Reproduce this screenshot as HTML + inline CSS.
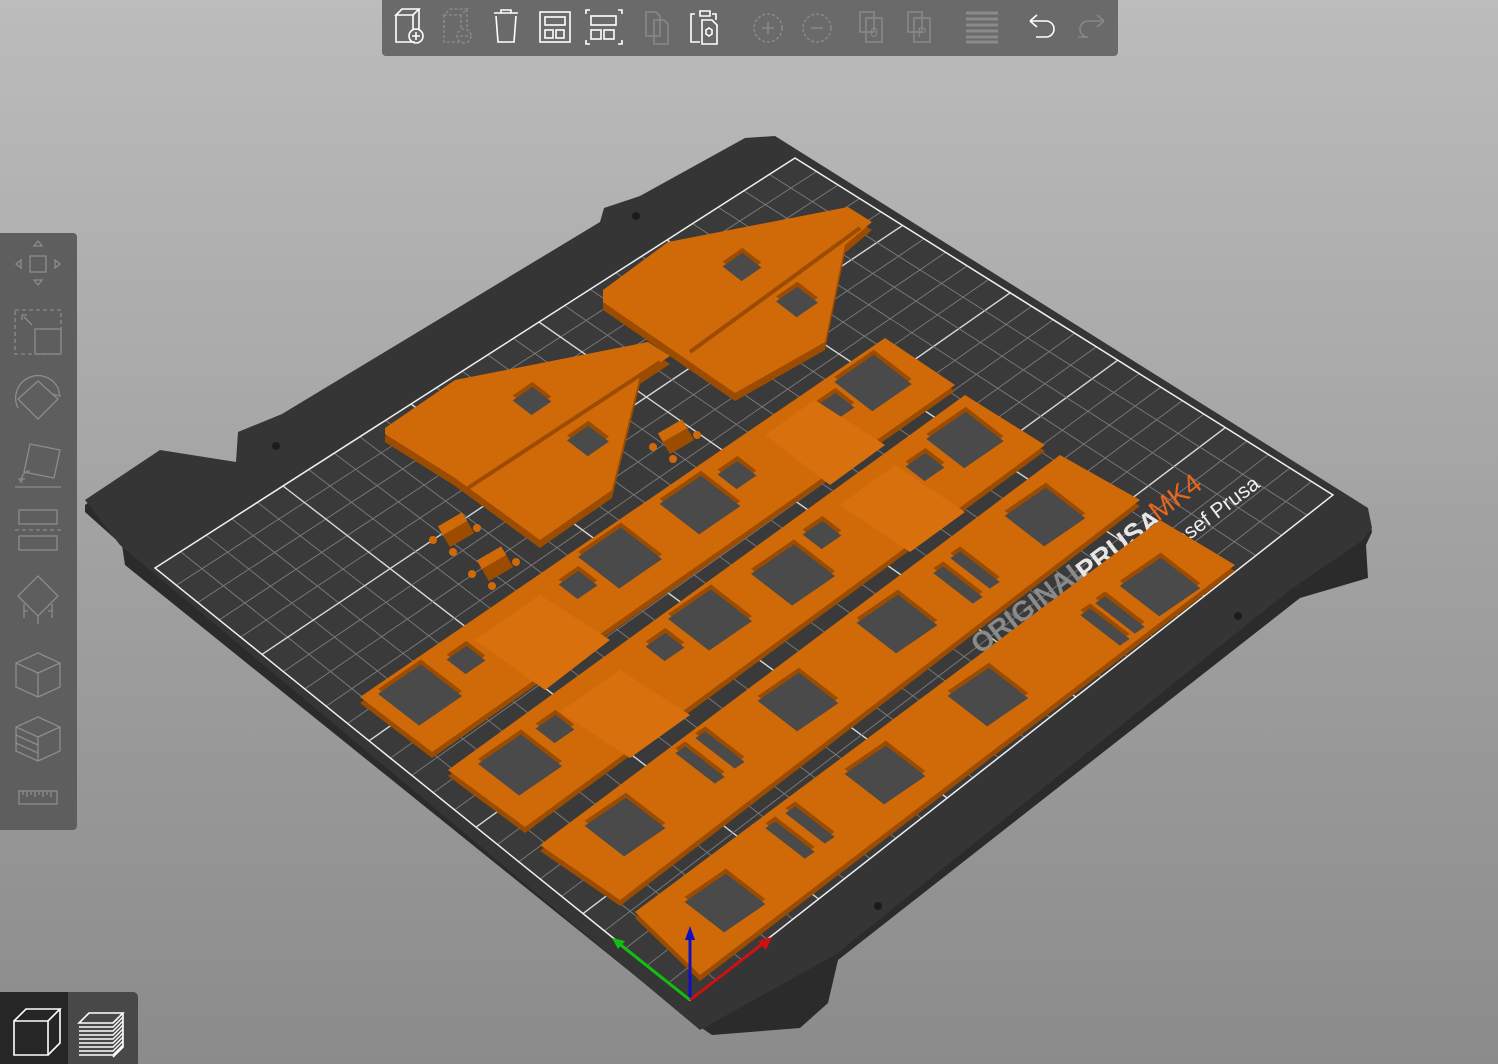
<!DOCTYPE html>
<html><head><meta charset="utf-8">
<style>
html,body{margin:0;padding:0;width:1498px;height:1064px;overflow:hidden}
body{background:linear-gradient(#bcbcbc,#a2a2a2 50%,#8b8b8b);font-family:"Liberation Sans",sans-serif;position:relative}
#scene{position:absolute;left:0;top:0}
.tb{position:absolute;left:382px;top:0;width:736px;height:56px;background:#6a6a6a;border-radius:0 0 4px 4px}
.lb{position:absolute;left:0;top:233px;width:77px;height:597px;background:#5e5e5e;border-radius:0 4px 4px 0}
.bl{position:absolute;left:0;top:992px;width:138px;height:72px;background:#484848;border-radius:0 5px 0 0}
.bl1{position:absolute;left:0;top:992px;width:68px;height:72px;background:#262626}
svg{position:absolute}
</style></head><body>
<svg id="scene" width="1498" height="1064" viewBox="0 0 1498 1064">
<polygon points="85,505 160,452 236,468 238,436 282,418 600,228 604,212 640,200 745,143 775,140 1368,512 1372,532 1366,545 1368,578 1300,598 838,960 828,1003 800,1028 712,1035 690,1020 125,565 122,545 85,512" fill="#2b2b2b"/>
<polygon points="85,500 160,450 236,462 238,432 282,414 600,222 604,208 640,196 745,138 775,136 1368,508 1372,528 1363,540 1290,590 835,955 700,1030 120,545" fill="#353535"/>
<g id="grid"></g>
<text x="0" y="0" transform="translate(980,655) rotate(-37)" font-size="28" fill="#8a8a8a" font-weight="bold">ORIGINAL</text>
<text x="0" y="0" transform="translate(1085,582) rotate(-37)" font-size="28" fill="#e6e6e6" font-weight="bold">PRUSA</text>
<text x="0" y="0" transform="translate(1158,522) rotate(-37)" font-size="28" fill="#e8661c">MK4</text>
<text x="0" y="0" transform="translate(1150,570) rotate(-37)" font-size="21" fill="#eee">by Josef Prusa</text>
<g id="parts"></g>
<circle cx="636" cy="216" r="4" fill="#1c1c1c"/><circle cx="276" cy="446" r="4" fill="#1c1c1c"/>
<circle cx="1238" cy="616" r="4" fill="#1c1c1c"/><circle cx="878" cy="906" r="4" fill="#1c1c1c"/>
<line x1="690" y1="1000" x2="690" y2="932" stroke="#1010c0" stroke-width="3"/><polygon points="685,940 695,940 690,926" fill="#1010c0"/>
<line x1="690" y1="1000" x2="617" y2="942" stroke="#10c010" stroke-width="3"/><polygon points="612,938 625,941 618,949" fill="#10c010"/>
<line x1="690" y1="1000" x2="765" y2="942" stroke="#d01010" stroke-width="3"/><polygon points="772,937 758,941 766,950" fill="#d01010"/>
</svg>

<div class="tb"></div>
<svg style="left:382px;top:0" width="736" height="56" fill="none" stroke="#fff" stroke-width="1.6">
<g><path d="M14 15h17l6-6h-17zM14 15v27h19M31 15v14M37 9v20"/><circle cx="34" cy="36" r="7"/><path d="M30 36h8M34 32v8"/></g>
<g stroke="#888" stroke-dasharray="3 2"><path d="M62 15h17l6-6h-17zM62 15v27h19M79 15v14M85 9v20"/><circle cx="82" cy="36" r="7"/><path d="M78 36h8"/></g>
<g><path d="M112 13h24M119 13v-3h10v3M114 16l2 26h16l2-26"/></g>
<g><rect x="158" y="12" width="30" height="30"/><rect x="163" y="17" width="20" height="8"/><rect x="163" y="30" width="8" height="8"/><rect x="174" y="30" width="8" height="8"/></g>
<g><path d="M204 14v-4h4M236 10h4v4M204 40v4h4M236 44h4v-4"/><rect x="209" y="16" width="25" height="9"/><rect x="209" y="30" width="10" height="9"/><rect x="222" y="30" width="10" height="9"/></g>
<g stroke="#888"><path d="M264 12h10l4 4v20h-14z"/><path d="M272 20h10l4 4v20h-14z"/></g>
<g><path d="M313 14h-4v28h9M318 11h10v5h-10zM330 14h4v6"/><path d="M320 20h10l5 5v19h-15z"/><path d="M327 28l3 2v4l-3 2-3-2v-4z"/></g>
<g stroke="#888" stroke-dasharray="3 2"><circle cx="386" cy="28" r="14"/><circle cx="435" cy="28" r="14"/></g>
<g stroke="#888"><path d="M386 22v12M380 28h12M429 28h12"/><rect x="478" y="12" width="14" height="20"/><rect x="484" y="18" width="16" height="24"/><rect x="526" y="12" width="14" height="20"/><rect x="532" y="18" width="16" height="24"/></g>
<text x="492" y="37" font-size="14" fill="#888" stroke="none" text-anchor="middle" font-family="Liberation Sans">0</text>
<text x="540" y="37" font-size="14" fill="#888" stroke="none" text-anchor="middle" font-family="Liberation Sans">P</text>
<g stroke="#8a8a8a" stroke-width="3"><path d="M584 13h32M584 19h32M584 25h32M584 31h32M584 37h32M584 42h32"/></g>
<g><path d="M648 21h16a8 8 0 0 1 0 16h-10M648 21l7-6M648 21l7 6"/></g>
<g stroke="#888"><path d="M722 21h-16a8 8 0 0 0 0 16h-10M722 21l-7-6M722 21l-7 6"/></g>
</svg>

<div class="lb"></div>
<svg style="left:0;top:233px" width="77" height="597" fill="none" stroke="#8c8c8c" stroke-width="1.3">
<path d="M38 8l4 5h-8zM38 52l4-5h-8zM16 31l5-4v8zM60 31l-5-4v8z"/><rect x="30" y="23" width="16" height="16"/>
<rect x="15" y="77" width="46" height="44" stroke-dasharray="4 3"/><rect x="35" y="96" width="26" height="25"/><path d="M24 84l8 8M22 82h5M22 82v5"/>
<path d="M18 175a22 22 0 0 1 40-20M58 155l2 8-8-2" /><path d="M38 148l20 18-20 20-20-20z"/>
<path d="M30 211l30 6-6 28-30-6zM15 254h46M22 248a8 8 0 0 1 8-10M22 250l-3-4h6"/>
<rect x="19" y="277" width="38" height="14"/><path d="M15 297h46" stroke-dasharray="4 3"/><rect x="19" y="303" width="38" height="14"/>
<path d="M38 343l20 20-20 20-20-20zM24 371v14M38 383v8M52 371v14M24 378h4M48 378h4"/>
<path d="M38 420l22 10v24l-22 10-22-10v-24zM16 430l22 10 22-10M38 440v24"/>
<path d="M38 484l22 10v24l-22 10-22-10v-24zM16 494l22 10 22-10M38 504v24M16 502l22 10M16 510l22 10M16 518l22 10"/>
<rect x="19" y="558" width="38" height="13"/><path d="M23 558v4M27 558v6M31 558v4M35 558v6M39 558v4M43 558v6M47 558v4M51 558v6"/>
</svg>

<div class="bl"></div><div class="bl1"></div>
<svg style="left:0;top:992px" width="138" height="72" fill="none" stroke="#fff" stroke-width="1.6">
<path d="M14 29h34v34h-34zM14 29l12-12h34l-12 12M60 17v34l-12 12"/>
<path d="M79 31h34l10-10h-34zM123 21v34l-10 10"/>
<g stroke-width="1.4"><path d="M79 35h34l10-10M79 39h34l10-10M79 43h34l10-10M79 47h34l10-10M79 51h34l10-10M79 55h34l10-10M79 59h34l10-10M79 63h34l10-10"/></g>
</svg>

<script>
var L=[155,568],T=[795,158],R=[1333,495],B=[690,1000];
function bl(s,t){
 var x=(1-s)*(1-t)*L[0]+s*(1-t)*T[0]+s*t*R[0]+(1-s)*t*B[0];
 var y=(1-s)*(1-t)*L[1]+s*(1-t)*T[1]+s*t*R[1]+(1-s)*t*B[1];
 return [x,y];}
var g='',N=25;
g+='<polygon points="'+[L,T,R,B].map(p=>p.join(',')).join(' ')+'" fill="#3a3a3a"/>';
for(var i=1;i<N;i++){var f=i/N,maj=(i%5==0);
 var a=bl(f,0),b=bl(f,1),c=bl(0,f),d=bl(1,f);
 var st=maj?'stroke="#d8d8d8" stroke-width="1.4"':'stroke="#7c7c7c" stroke-width="0.9"';
 g+='<line x1="'+a[0]+'" y1="'+a[1]+'" x2="'+b[0]+'" y2="'+b[1]+'" '+st+'/>';
 g+='<line x1="'+c[0]+'" y1="'+c[1]+'" x2="'+d[0]+'" y2="'+d[1]+'" '+st+'/>';}
g+='<polygon points="'+[L,T,R,B].map(p=>p.join(',')).join(' ')+'" fill="none" stroke="#f0f0f0" stroke-width="1.5"/>';
document.getElementById('grid').innerHTML=g;

var OR='#d06a08',ED='#9c4c00';
function P(pts){return pts.map(p=>p[0].toFixed(1)+','+p[1].toFixed(1)).join(' ');}
function solid(pts,h){h=h||6;var s=pts.map(p=>[p[0],p[1]+h]);
 return '<polygon points="'+P(s)+'" fill="'+ED+'"/><polygon points="'+P(pts)+'" fill="'+OR+'"/>';}
var u=[0.824,-0.566],v=[0.79,0.61];
function win(c,a,b){a=a||52;b=b||a;
 var p=[[c[0]-u[0]*a/2-v[0]*b/2,c[1]-u[1]*a/2-v[1]*b/2],[c[0]+u[0]*a/2-v[0]*b/2,c[1]+u[1]*a/2-v[1]*b/2],[c[0]+u[0]*a/2+v[0]*b/2,c[1]+u[1]*a/2+v[1]*b/2],[c[0]-u[0]*a/2+v[0]*b/2,c[1]-u[1]*a/2+v[1]*b/2]];
 var inner=p.map(q=>[q[0],q[1]+5]);
 return '<polygon points="'+P(p)+'" fill="'+ED+'"/><polygon points="'+P(inner)+'" fill="#4a4a4a"/>';}
var s='';
s+=solid([[603,290],[668,242],[848,207],[872,222],[845,245],[825,342],[735,393],[603,302]],8);
s+='<line x1="690" y1="352" x2="860" y2="228" stroke="'+ED+'" stroke-width="4"/>';
s+=solid([[385,428],[455,380],[648,342],[670,356],[640,376],[612,490],[540,540],[455,478],[385,434]],8);
s+='<line x1="468" y1="488" x2="660" y2="362" stroke="'+ED+'" stroke-width="4"/>';
s+=win([742,262],24)+win([797,297],26)+win([532,396],24)+win([588,436],26);
[[455,528],[494,562],[675,435]].forEach(function(c){
 s+='<circle cx="'+(c[0]-22)+'" cy="'+(c[1]+12)+'" r="4" fill="'+OR+'"/><circle cx="'+(c[0]+22)+'" cy="'+(c[1])+'" r="4" fill="'+OR+'"/><circle cx="'+(c[0]-2)+'" cy="'+(c[1]+24)+'" r="4" fill="'+OR+'"/>';
 s+='<rect x="'+(c[0]-14)+'" y="'+(c[1]-6)+'" width="28" height="20" fill="'+ED+'" transform="rotate(-30 '+c[0]+' '+c[1]+')"/>';
 s+='<rect x="'+(c[0]-14)+'" y="'+(c[1]-10)+'" width="28" height="10" fill="'+OR+'" transform="rotate(-30 '+c[0]+' '+c[1]+')"/>';});
s+=solid([[360,697],[885,338],[955,385],[432,752]]);
s+=solid([[448,770],[965,395],[1045,445],[525,827]]);
s+=solid([[540,845],[1060,455],[1140,500],[620,900]]);
s+=solid([[635,912],[1160,520],[1235,565],[700,975]]);
[[420,690,52],[466,655,24],[578,580,24],[620,553,52],[737,470,24],[700,500,50],[835,402,24],[873,378,48]].forEach(w=>s+=win([w[0],w[1]],w[2]));
[[520,760,52],[555,724,24],[665,642,24],[710,615,52],[822,530,24],[793,570,52],[925,462,24],[965,435,48]].forEach(w=>s+=win([w[0],w[1]],w[2]));
[[625,822,50],[798,697,50],[897,619,50],[1045,512,50],[725,898,50],[885,770,50],[988,692,50],[1160,582,50]].forEach(w=>s+=win([w[0],w[1]],w[2]));
// bar gaps
[[700,760],[720,745],[958,580],[975,565],[790,835],[810,820],[1120,610],[1105,622]].forEach(w=>s+=win(w,12,50));
s+='<polygon points="'+P([[475,640],[540,595],[610,640],[545,690]])+'" fill="#d8700e"/>';
s+='<polygon points="'+P([[765,435],[815,400],[885,445],[830,485]])+'" fill="#d8700e"/>';
s+='<polygon points="'+P([[560,712],[620,670],[690,715],[630,758]])+'" fill="#d8700e"/>';
s+='<polygon points="'+P([[840,505],[895,465],[965,512],[910,552]])+'" fill="#d8700e"/>';
document.getElementById('parts').innerHTML=s;
</script>
</body></html>
